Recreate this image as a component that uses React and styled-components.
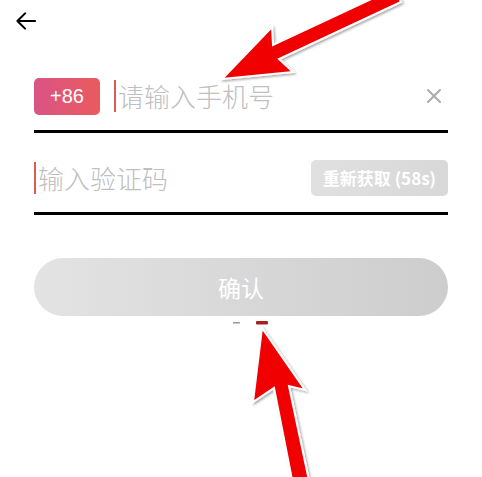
import React from 'react'
import styled, { createGlobalStyle } from 'styled-components'

const GlobalStyle = createGlobalStyle`
  html, body {
    margin: 0;
    padding: 0;
    background: #fff;
  }
  body {
    font-family: "Noto Sans CJK SC", "Noto Sans", "Liberation Sans", sans-serif;
  }
`

const Page = styled.div`
  position: relative;
  width: 482px;
  height: 477px;
  overflow: hidden;
  background: #fff;
`
const Header = styled.div`
  display: flex;
  align-items: center;
  height: 42px;
  padding: 0 16px;
`
const BackButton = styled.button`
  display: flex;
  align-items: center;
  justify-content: center;
  width: 20px;
  height: 20px;
  padding: 0;
  border: none;
  background: none;
`
const Form = styled.div`
  display: flex;
  flex-direction: column;
  padding: 20px 34px 0;
`
const Field = styled.div`
  display: flex;
  align-items: center;
  height: ${props => props.h}px;
  padding-top: ${props => props.pt || 0}px;
  border-bottom: 3px solid #000;
`
const CountryCode = styled.div`
  display: flex;
  align-items: center;
  justify-content: center;
  width: 66px;
  height: 37px;
  border-radius: 5px;
  background: linear-gradient(90deg, #da5486, #ea5b5d);
  color: #fff;
  font-family: "Liberation Sans", sans-serif;
  font-size: 20px;
  margin-right: 14px;
`
const Caret = styled.span`
  width: 2px;
  height: 32px;
  background: #df5a55;
  margin-right: 2px;
`
const Placeholder = styled.span`
  flex: 1;
  font-size: 26px;
  font-weight: 300;
  color: #c0c0c0;
  line-height: 32px;
`
const ClearIcon = styled.span`
  display: flex;
  margin-right: 6px;
`
const ResendButton = styled.button`
  height: 36px;
  padding: 0 12px;
  border: none;
  border-radius: 5px;
  background: linear-gradient(90deg, #e0e0e0, #d8d8d8);
  color: #fff;
  font-family: "Noto Sans CJK SC", "Liberation Sans", sans-serif;
  font-size: 17px;
  font-weight: 600;
  white-space: nowrap;
`
const ConfirmButton = styled.button`
  margin-top: 43px;
  height: 58px;
  border: none;
  border-radius: 29px;
  background: linear-gradient(90deg, #e3e3e3, #cdcdcd);
  color: #fff;
  font-family: "Noto Sans CJK SC", sans-serif;
  font-size: 23px;
`
const Annotations = styled.svg`
  position: absolute;
  left: 0;
  top: 0;
  pointer-events: none;
`

const App = () => {
  return (
    <Page>
      <GlobalStyle />
      <Header>
        <BackButton>
          <svg width="21" height="18" viewBox="0 0 21 18" fill="none" stroke="#000" strokeWidth="2.2" strokeLinecap="round" strokeLinejoin="round">
            <path d="M20 9H1.5M9.5 1L1.5 9l8 8" />
          </svg>
        </BackButton>
      </Header>
      <Form>
        <Field h={68}>
          <CountryCode>+86</CountryCode>
          <Caret />
          <Placeholder>请输入手机号</Placeholder>
          <ClearIcon>
            <svg width="16" height="16" viewBox="0 0 16 16" stroke="#ababab" strokeWidth="2" strokeLinecap="round">
              <path d="M2 2l12 12M14 2L2 14" />
            </svg>
          </ClearIcon>
        </Field>
        <Field h={69} pt={10}>
          <Caret />
          <Placeholder>输入验证码</Placeholder>
          <ResendButton>重新获取 (58s)</ResendButton>
        </Field>
        <ConfirmButton>确认</ConfirmButton>
      </Form>
      <Annotations width="482" height="477" viewBox="0 0 482 477">
        <defs>
          <filter id="shade" x="-20%" y="-20%" width="140%" height="140%">
            <feDropShadow dx="1.5" dy="1.5" stdDeviation="1.2" floodColor="#000" floodOpacity="0.35" />
          </filter>
        </defs>
        <g fill="#f00000" stroke="#fff" strokeWidth="2" strokeLinejoin="miter" filter="url(#shade)">
          <polygon points="222,79 272,27 273,45 395,-12 401,2 279,59 293,72" />
          <polygon points="262,328 305,390 289,386 311,490 294,490 274,388 253,402" />
        </g>
        <rect x="233" y="322" width="7" height="1.5" fill="#9a9a9a" />
        <rect x="256" y="321" width="12" height="3.5" rx="1" fill="#a82020" />
      </Annotations>
    </Page>
  )
}

export default App
